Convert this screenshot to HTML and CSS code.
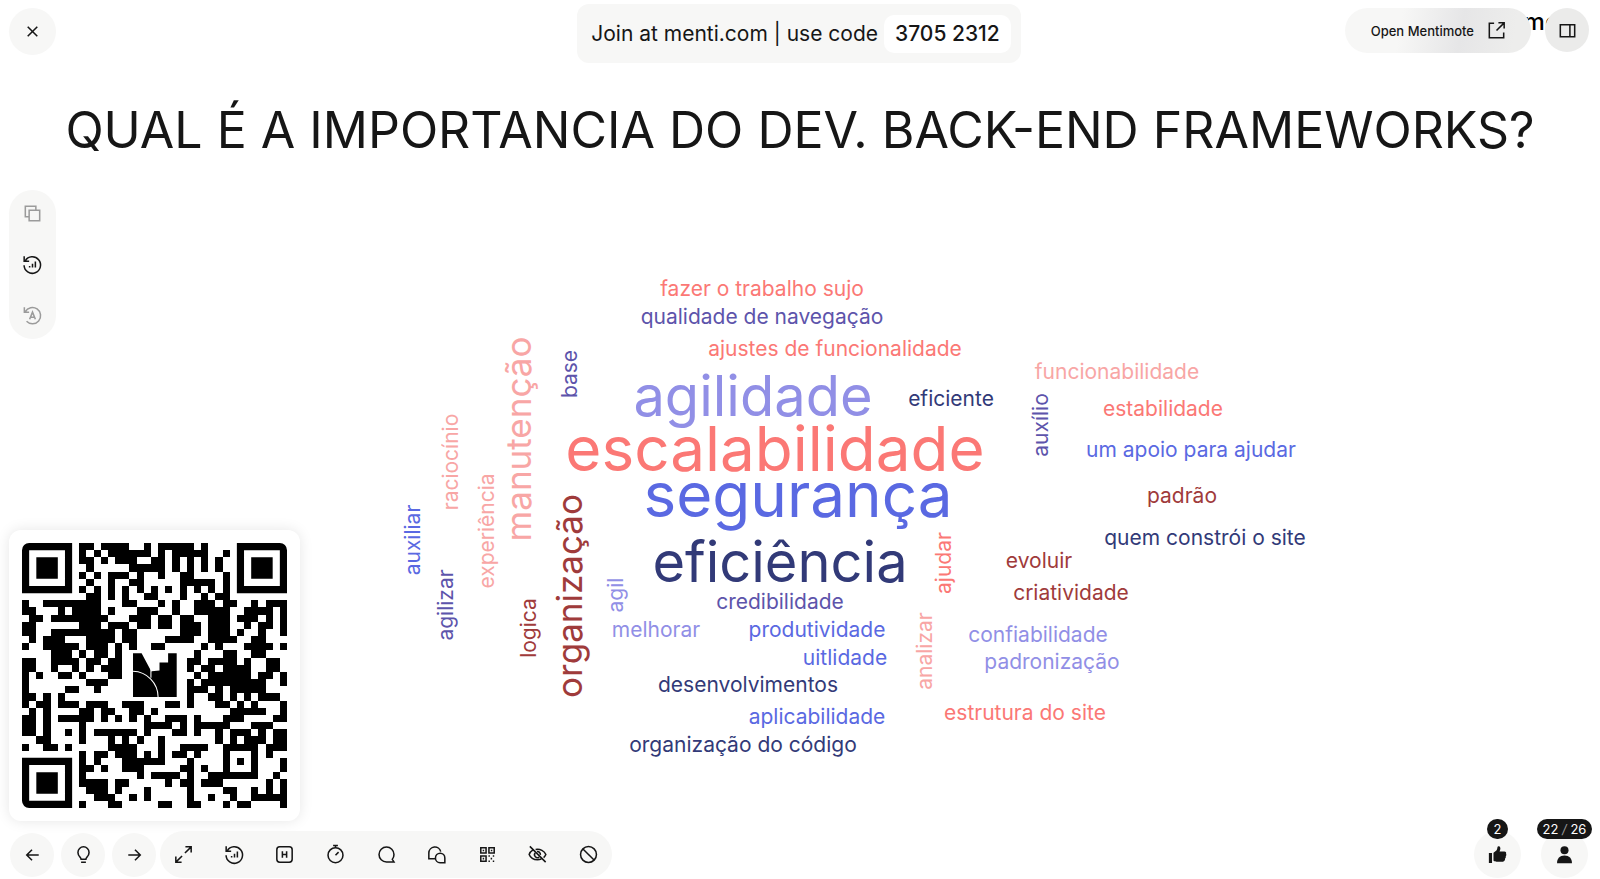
FILE: index.html
```html
<!DOCTYPE html>
<html lang="pt-BR">
<head>
<meta charset="utf-8">
<meta name="viewport" content="width=device-width, initial-scale=1">
<title>Mentimeter</title>
<link rel="stylesheet" href="styles.css">
</head>
<body>
<svg class="defs" aria-hidden="true">
  <symbol id="i-replay" viewBox="0 0 24 24"><path d="M4.400 8.200A8.600 8.600 0 1 1 3.200 12.800M3.300 3.500v5.200h5.200" /><path d="M9 15.200v-1.700M12 15.200v-4M15 15.200V8.800"/></symbol>
</svg>
<header class="top">
  <button class="round round-lg" aria-label="Fechar"><svg class="icon" viewBox="0 0 24 24"><path d="M7 7l10 10M17 7l-10 10"/></svg></button>
  <p class="join">Join at menti.com | use code <strong class="code">3705 2312</strong></p>
  <div class="top-right">
    <span class="brand">me</span>
    <button class="remote">Open Mentimote
      <svg class="icon" viewBox="0 0 24 24"><path d="M9.500 4.500H4.500v15h15V14M14 4h6v6M20 4l-8 8"/></svg>
    </button>
    <button class="round round-shade" aria-label="Painel"><svg class="icon" viewBox="0 0 24 24"><path d="M4.500 6h15v12.500h-15zM14.500 6v12.500" /></svg></button>
  </div>
</header>
<h1 class="title">QUAL É A IMPORTANCIA DO DEV. BACK-END FRAMEWORKS?</h1>
<main class="stage">
  <div class="side">
    <div class="rail">
      <button class="tool muted" aria-label="Copiar"><svg class="icon" viewBox="0 0 24 24"><path d="M8 15.500H4.500V4.500h11v3.500M8.500 8.500H19.500V19.500H8.500z"/></svg></button>
      <button class="tool" aria-label="Repor resultados"><svg class="icon"><use href="#i-replay"/></svg></button>
      <button class="tool muted" aria-label="Repor respostas"><svg class="icon" viewBox="0 0 24 24"><path d="M4.500 8A8.500 8.500 0 1 1 5.800 18M3.500 3.500v5h5M9 16L12 8.500l3 7.500M10 13.800h4"/></svg></button>
    </div>
    <div class="qr-card">
      <svg class="qr" viewBox="0 0 37 37" role="img" aria-label="QR code">
        <g shape-rendering="crispEdges">
        <path class="qr-dots" transform="translate(0 .5)" d="M8 0h2M11 0h4M17 0h1M19 0h5M25 0h1
M8 1h1M10 1h1M12 1h6M19 1h1M21 1h5M28 1h1
M8 2h2M11 2h1M13 2h3M18 2h2M21 2h1M23 2h1M25 2h1M27 2h1
M9 3h1M15 3h5M21 3h1M23 3h1M25 3h1M27 3h1
M8 4h1M10 4h1M12 4h3M16 4h1M19 4h1M22 4h2M28 4h1
M9 5h1M12 5h1M15 5h2M22 5h5M28 5h1
M8 6h1M10 6h1M12 6h1M14 6h1M16 6h1M18 6h1M20 6h1M22 6h1M24 6h1M26 6h1M28 6h1
M9 7h2M12 7h1M14 7h1M17 7h2M22 7h1M25 7h1M27 7h2
M0 8h1M3 8h7M10 8h1M14 8h2M19 8h1M21 8h1M24 8h3M28 8h2M32 8h1M34 8h3
M0 9h2M5 9h1M7 9h4M12 9h1M16 9h3M21 9h1M24 9h5M31 9h3M34 9h1M36 9h1
M1 10h2M4 10h8M15 10h3M19 10h2M22 10h2M26 10h3M30 10h3M34 10h1M36 10h1
M0 11h2M8 11h3M12 11h3M16 11h2M19 11h2M22 11h3M26 11h3M31 11h1M33 11h2M36 11h1
M0 12h2M4 12h9M14 12h2M22 12h3M26 12h3M30 12h1M33 12h1M36 12h1
M1 13h1M3 13h2M5 13h1M9 13h4M14 13h2M20 13h4M26 13h4M32 13h2
M0 14h1M3 14h5M9 14h3M13 14h1M15 14h1M18 14h2M25 14h1M27 14h1M31 14h4M36 14h1
M4 15h3M8 15h1M10 15h2M13 15h1M24 15h1M28 15h2M32 15h2
M0 16h2M4 16h4M9 16h2M12 16h2M23 16h2M26 16h4M31 16h1M34 16h2
M0 17h2M4 17h1M7 17h1M9 17h1M11 17h3M23 17h1M25 17h2M28 17h4M34 17h2
M0 18h1M2 18h1M5 18h2M8 18h1M12 18h2M24 18h1M26 18h6M33 18h2M36 18h1
M0 19h1M9 19h3M23 19h1M25 19h9M36 19h1
M0 20h1M6 20h2M10 20h1M23 20h3M27 20h1M29 20h5
M0 21h2M3 21h1M5 21h1M23 21h1M26 21h2M29 21h1M31 21h1M33 21h2M35 21h1
M0 22h1M2 22h2M5 22h3M9 22h3M14 22h3M20 22h2M23 22h1M27 22h2M30 22h1M32 22h1M36 22h1
M1 23h1M3 23h1M8 23h2M11 23h2M15 23h2M18 23h1M29 23h5M36 23h1
M0 24h2M3 24h1M5 24h5M11 24h1M13 24h1M15 24h1M17 24h1M20 24h3M24 24h1M28 24h3M35 24h2
M0 25h2M3 25h1M8 25h1M17 25h4M22 25h1M24 25h5M32 25h3
M0 26h2M3 26h1M6 26h1M8 26h1M10 26h6M17 26h1M21 26h2M24 26h1M27 26h1M29 26h3M33 26h1M35 26h2
M2 27h2M8 27h1M12 27h1M14 27h1M16 27h1M19 27h1M27 27h1M29 27h1M31 27h3M35 27h2
M0 28h1M3 28h2M6 28h1M12 28h4M19 28h1M22 28h4M34 28h3
M8 29h1M10 29h2M13 29h3M17 29h1M19 29h1M21 29h2M24 29h1M34 29h1
M8 30h1M10 30h1M14 30h6M23 30h1M36 30h1
M8 31h2M11 31h1M14 31h3M22 31h2M25 31h1M36 31h1
M8 32h1M16 32h1M18 32h4M23 32h1M26 32h2M35 32h1
M8 33h4M13 33h2M20 33h1M22 33h2M25 33h3M34 33h1M36 33h1
M9 34h3M13 34h1M17 34h1M23 34h1M28 34h2M32 34h1M34 34h1M36 34h1
M10 35h3M15 35h1M17 35h1M23 35h1M26 35h1M29 35h1M32 35h5
M8 36h1M12 36h2M19 36h2M23 36h2M28 36h1M30 36h2M36 36h1"/>
        <path class="qr-frame" d="M28.500 28.500h4v4h-4zM30 30.500h1"/>
        </g>
        <path d="M1 0h6v7H0V1a1 1 0 0 1 1-1zm0 1v5h5V1zM2 2h3v3H2zM30 0h6a1 1 0 0 1 1 1v6h-7zm1 1v5h5V1zm1 1h3v3h-3zM0 30h7v7H1a1 1 0 0 1-1-1zm1 1v5h5v-5zm1 1h3v3H2z" fill-rule="evenodd"/>
        <path class="paper" d="M15 15h7v7h-7z"/>
        <path d="M15.500 15.400h1.200l1.400 2.600v3.500h-2.600zM18.100 17.900l1.100-.1v-1.100h1.200v-1.300h1.200v6.100h-3.500z"/>
        <path class="arc" d="M15.500 17.900a3.600 3.600 0 0 1 3.500 3.600M18 17.300v1.500"/>
      </svg>
    </div>
  </div>
  <svg class="cloud" viewBox="300 190 1300 631" role="img" aria-label="Nuvem de palavras">
    <g class="s">
      <text class="coral" x="762" y="296">fazer o trabalho sujo</text>
      <text class="violet" x="762" y="324">qualidade de navegação</text>
      <text class="coral" x="835" y="356">ajustes de funcionalidade</text>
      <text class="navy" x="951" y="406">eficiente</text>
      <text class="violet" x="780" y="609">credibilidade</text>
      <text class="lilac" x="656" y="637">melhorar</text>
      <text class="blue" x="817" y="637">produtividade</text>
      <text class="blue" x="845" y="665">uitlidade</text>
      <text class="navy" x="748" y="692">desenvolvimentos</text>
      <text class="blue" x="817" y="724">aplicabilidade</text>
      <text class="navy" x="743" y="752">organização do código</text>
      <text class="pink" x="1117" y="379">funcionabilidade</text>
      <text class="coral" x="1163" y="416">estabilidade</text>
      <text class="blue" x="1191" y="457">um apoio para ajudar</text>
      <text class="wine" x="1182" y="503">padrão</text>
      <text class="navy" x="1205" y="545">quem constrói o site</text>
      <text class="wine" x="1039" y="568">evoluir</text>
      <text class="wine" x="1071" y="600">criatividade</text>
      <text class="lilac" x="1038" y="642">confiabilidade</text>
      <text class="lilac" x="1052" y="669">padronização</text>
      <text class="coral" x="1025" y="720">estrutura do site</text>
      <text class="violet" transform="translate(1048 425) rotate(-90)">auxílio</text>
      <text class="coral" transform="translate(951 563) rotate(-90)">ajudar</text>
      <text class="pink" transform="translate(932 651) rotate(-90)">analizar</text>
      <text class="lilac" transform="translate(623 595) rotate(-90)">agil</text>
      <text class="blue" transform="translate(420 540) rotate(-90)">auxiliar</text>
      <text class="pink" transform="translate(458 462) rotate(-90)">raciocínio</text>
      <text class="violet" transform="translate(453 605) rotate(-90)">agilizar</text>
      <text class="pink" transform="translate(494 531) rotate(-90)">experiência</text>
      <text class="violet" transform="translate(577 374) rotate(-90)">base</text>
      <text class="wine" transform="translate(536 628) rotate(-90)">logica</text>
    </g>
    <g class="m">
      <text class="pink" transform="translate(531 439) rotate(-90)">manutenção</text>
      <text class="wine" transform="translate(582 596) rotate(-90)">organização</text>
    </g>
    <g class="l">
      <text class="lilac" x="753" y="416">agilidade</text>
      <text class="navy" x="780" y="582">eficiência</text>
    </g>
    <g class="xl">
      <text class="coral" x="775" y="471">escalabilidade</text>
      <text class="blue" x="798" y="517">segurança</text>
    </g>
  </svg>
</main>
<footer class="bottom">
  <button class="round" aria-label="Anterior"><svg class="icon" viewBox="0 0 24 24"><path d="M18.500 12.500H6M11.500 7l-5.500 5.500 5.500 5.500"/></svg></button>
  <button class="round" aria-label="Dica"><svg class="icon" viewBox="0 0 24 24"><path d="M9.500 17c0-2-3.300-3.200-3.300-7.200a5.800 5.800 0 0 1 11.600 0c0 4-3.300 5.200-3.300 7.200zM9.500 20h5"/></svg></button>
  <button class="round" aria-label="Próximo"><svg class="icon" viewBox="0 0 24 24"><path d="M5.500 12.500H18M12.500 7l5.500 5.500-5.500 5.500"/></svg></button>
  <div class="group">
    <button class="tool" aria-label="Tela cheia"><svg class="icon" viewBox="0 0 24 24"><path d="M13.500 10.500l6.500-6.500M14 4h6v6M10.500 13.500l-6.500 6.500M4 14v6h6"/></svg></button>
    <button class="tool" aria-label="Resultados"><svg class="icon"><use href="#i-replay"/></svg></button>
    <button class="tool" aria-label="Ocultar"><svg class="icon" viewBox="0 0 24 24"><rect x="4" y="4" width="16" height="16" rx="3"/><path d="M9.800 8.500v7M14.200 8.500v7M9.800 12h4.400"/></svg></button>
    <button class="tool" aria-label="Cronômetro"><svg class="icon" viewBox="0 0 24 24"><circle cx="12" cy="12.700" r="7.800"/><path d="M9.500 2.500h5M12 3v2M12 12.700l3.200-3.200"/></svg></button>
    <button class="tool" aria-label="Comentários"><svg class="icon" viewBox="0 0 24 24"><path d="M19.800 19.800h-7.800A7.800 7.800 0 1 1 19.800 12c0 2-.6 3.800-1.700 5z"/></svg></button>
    <button class="tool" aria-label="Perguntas"><svg class="icon" viewBox="0 0 24 24"><path d="M10.500 16.500H4V10.300a6.300 6.300 0 0 1 12.400-1.300M20.700 20.500h-5a4.900 4.900 0 1 1 5-4.900z"/></svg></button>
    <button class="tool" aria-label="QR code"><svg class="icon" viewBox="0 0 24 24"><path d="M5 5h5.500v5.500H5zM13.500 5H19v5.500h-5.500zM5 13.500h5.500V19H5zM7 7.800h1.500M15.500 7.800H17M7 16.300h1.500M13 13.500h1.500M17.500 13.500H19M15.300 16.300h1.500M13 19h1.500M17.500 19H19"/></svg></button>
    <button class="tool" aria-label="Esconder resultados"><svg class="icon" viewBox="0 0 24 24"><path d="M4 3.500l16.500 16.500M7 7.500C5 8.700 3.800 10.500 3.300 12c1.200 3 4.500 5.500 8.700 5.500 1.500 0 2.800-.3 4-.8M10 6.700c4.800-.9 9.200 1.600 10.700 5.300-.5 1.200-1.300 2.300-2.300 3.200M9.500 10.500a3 3 0 0 0 4.200 4.200M11.500 9a3 3 0 0 1 3.500 3.300"/></svg></button>
    <button class="tool" aria-label="Fechar votação"><svg class="icon" viewBox="0 0 24 24"><circle cx="12" cy="12" r="8.300"/><path d="M6.200 6.200l11.600 11.600"/></svg></button>
  </div>
  <div class="counters">
    <button class="round round-lg counter" aria-label="Curtidas: 2"><span class="badge">2</span>
      <svg class="icon solid" viewBox="0 0 24 24"><path d="M3 10.500h3.300v10.300H3zM7.800 10.300l3-2.500c.9-1 1-2.500 1.200-3.700.3-1.300 3-1 3 1.400 0 1.300-.5 2.500-.8 3.300h5c1.600 0 2.300 1.200 1.700 2.500.5.800.4 1.900-.3 2.600.3.900 0 1.900-.7 2.400.2 1.500-.6 3.300-2.300 3.300H11c-1.300 0-2.200-.5-3.200-1z"/></svg></button>
    <button class="round round-lg counter" aria-label="Participantes: 22 de 26"><span class="badge">22 <i>/</i> 26</span>
      <svg class="icon solid" viewBox="0 0 24 24"><circle cx="12" cy="7.500" r="4.200"/><path d="M4.200 21c0-4.800 2.800-8 7.800-8s7.800 3.200 7.800 8z"/></svg></button>
  </div>
</footer>
</body>
</html>
```
FILE: styles.css
```css
* { box-sizing: border-box; }
body {
  margin: 0;
  min-height: 100vh;
  display: flex;
  flex-direction: column;
  background: #fff;
  color: #161616;
  font-family: Inter, "Liberation Sans", sans-serif;
}
button {
  border: 0;
  padding: 0;
  background: none;
  color: inherit;
  font: inherit;
  cursor: pointer;
}
.defs { position: absolute; width: 0; height: 0; }
.icon {
  display: block;
  width: 23px;
  height: 23px;
  fill: none;
  stroke: currentColor;
  stroke-width: 1.6;
}
.solid { fill: currentColor; stroke: none; }
.round {
  display: flex;
  align-items: center;
  justify-content: center;
  flex: none;
  width: 44px;
  height: 44px;
  border-radius: 50%;
  background: #f7f7f6;
}
.round-lg { width: 47px; height: 47px; }
.round-shade { background: #ebebea; }
.tool { display: flex; justify-content: center; width: 23px; }
.muted { color: #9b9b9b; }

.top {
  display: grid;
  grid-template-columns: 1fr auto 1fr;
  align-items: start;
  padding: 8px 11px 0 9px;
  height: 64px;
}
.join {
  display: flex;
  align-items: center;
  gap: 6px;
  height: 59px;
  margin: -4px 0 0;
  padding: 0 10px 0 14px;
  border-radius: 12px;
  background: #f7f7f6;
  font-size: 21px;
  white-space: nowrap;
}
.code {
  padding: 0 11px;
  border-radius: 10px;
  background: #fff;
  font-weight: 500;
  line-height: 38px;
}
.top-right {
  position: relative;
  display: flex;
  justify-content: flex-end;
  gap: 14px;
}
.brand {
  position: absolute;
  top: 0;
  right: 30px;
  font-size: 24px;
  font-weight: 500;
  line-height: 28px;
  color: #000;
}
.remote {
  position: relative;
  display: flex;
  align-items: center;
  gap: 11px;
  height: 45px;
  padding: 0 23px 0 26px;
  border-radius: 23px;
  background: linear-gradient(100deg, #f7f7f6 30%, #e6e6e7 62%, #ededec 90%);
  font-size: 13px;
  font-weight: 500;
}
.top-right .round { position: relative; }

.title {
  margin: 0;
  padding-top: 34px;
  height: 126px;
  font-size: 50px;
  font-weight: 400;
  line-height: 64px;
  text-align: center;
  white-space: nowrap;
}

.stage {
  flex: 1;
  display: grid;
  grid-template-columns: 300px 1fr;
}
.side {
  display: flex;
  flex-direction: column;
  justify-content: space-between;
  align-items: flex-start;
  padding-left: 9px;
}
.rail {
  display: flex;
  flex-direction: column;
  align-items: center;
  gap: 28px;
  width: 47px;
  padding: 12px 0;
  border-radius: 24px;
  background: #f7f7f6;
}
.qr-card {
  width: 100%;
  padding: 13px;
  border-radius: 12px;
  background: #fff;
  box-shadow: 0 0 14px rgba(0, 0, 0, .1);
}
.qr { display: block; width: 100%; fill: #000; }
.qr-dots, .qr-frame { fill: none; stroke: #000; stroke-width: 1; }
.paper { fill: #fff; }
.arc { fill: none; stroke: #fff; stroke-width: .15; }

.cloud { display: block; width: 100%; }
.cloud text { text-anchor: middle; }
.s { font-size: 21px; }
.m { font-size: 35px; }
.l { font-size: 56px; }
.xl { font-size: 62px; }
.coral { fill: #fb7875; }
.pink { fill: #f8a6a5; }
.violet { fill: #5d54ab; }
.lilac { fill: #918fe6; }
.blue { fill: #5a69e2; }
.navy { fill: #323a78; }
.wine { fill: #9f3b3b; }

.bottom {
  display: flex;
  align-items: center;
  gap: 7px;
  padding: 10px 12px 1px 10px;
}
.group {
  display: flex;
  justify-content: space-between;
  align-items: center;
  width: 452px;
  height: 47px;
  margin-left: -3px;
  padding: 0 12px;
  border-radius: 24px;
  background: #f7f7f6;
}
.counters { display: flex; gap: 20px; margin-left: auto; }
.counter { position: relative; }
.badge {
  position: absolute;
  top: -12px;
  min-width: 21px;
  padding: 0 6px;
  border-radius: 10px;
  background: #161616;
  color: #fff;
  font-size: 13px;
  line-height: 20px;
  white-space: nowrap;
}
.badge i { color: #999; }
```
